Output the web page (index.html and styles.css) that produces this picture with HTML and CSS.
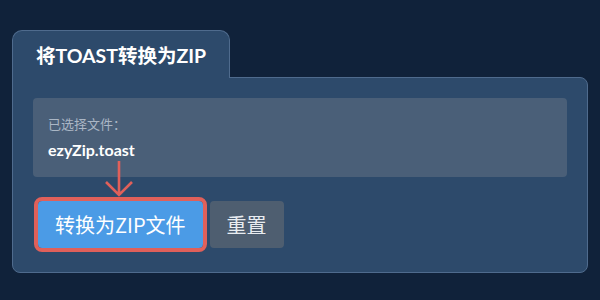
FILE: index.html
```html
<!DOCTYPE html>
<html lang="zh-CN">
<head>
    <meta charset="UTF-8">
    <title>将TOAST转换为ZIP</title>
    <link rel="stylesheet" href="styles.css">
</head>
<body>
    <div class="converter">
        <div class="converter-tab">将TOAST转换为ZIP</div>
        <div class="converter-panel">
            <div class="file-box">
                <div class="file-label">已选择文件：</div>
                <div class="file-name">ezyZip.toast</div>
            </div>
            <div class="actions">
                <button class="btn btn-convert">转换为ZIP文件</button>
                <button class="btn btn-reset">重置</button>
            </div>
            <svg class="hint-arrow" width="30" height="38" viewBox="0 0 30 38">
                <path d="M15 1 V35 M2 22 L15 35 L28 22" fill="none" stroke="#e0605a" stroke-width="2.6"/>
            </svg>
        </div>
    </div>
</body>
</html>
```

FILE: styles.css
```css
body {
    margin: 0;
    padding: 30px 12px 0 12px;
    background: #10223a;
    font-family: Lato, "Noto Sans CJK SC", sans-serif;
    height: 300px;
    box-sizing: border-box;
}
.converter {
    width: 576px;
}
.converter-tab {
    display: inline-block;
    position: relative;
    z-index: 1;
    background: #2d4a6b;
    border: 1px solid #4f6b8d;
    border-bottom: none;
    border-radius: 10px 10px 0 0;
    padding: 12px 23px 0 23px;
    height: 35px;
    margin-bottom: -1px;
    color: #ffffff;
    font-size: 19.5px;
    font-weight: bold;
    line-height: 26px;
}
.converter-panel {
    position: relative;
    background: #2d4a6b;
    border: 1px solid #4f6b8d;
    border-radius: 0 8px 8px 8px;
    padding: 20px 20px 24px 20px;
}
.file-box {
    background: #4a5f78;
    border-radius: 4px;
    padding: 16px 15px 16px 15px;
}
.file-label {
    color: #aab6c5;
    font-size: 13px;
    line-height: 20px;
}
.file-name {
    margin-top: 5px;
    color: #ffffff;
    font-size: 16px;
    font-weight: bold;
    line-height: 22px;
}
.actions {
    display: flex;
    gap: 7px;
    margin-top: 24px;
}
.btn {
    height: 47px;
    border: none;
    border-radius: 4px;
    font-family: "Noto Sans CJK SC", sans-serif;
    font-size: 20px;
    color: #ffffff;
    cursor: pointer;
}
.btn-convert {
    margin-left: 5px;
    padding: 0 17px;
    background: #4b9be6;
    outline: 4px solid #e0605a;
    outline-offset: 0;
}
.btn-reset {
    padding: 0 17px;
    background: #4e5e70;
    color: #e8ecf0;
}
.hint-arrow {
    position: absolute;
    left: 91px;
    top: 82px;
}
```
